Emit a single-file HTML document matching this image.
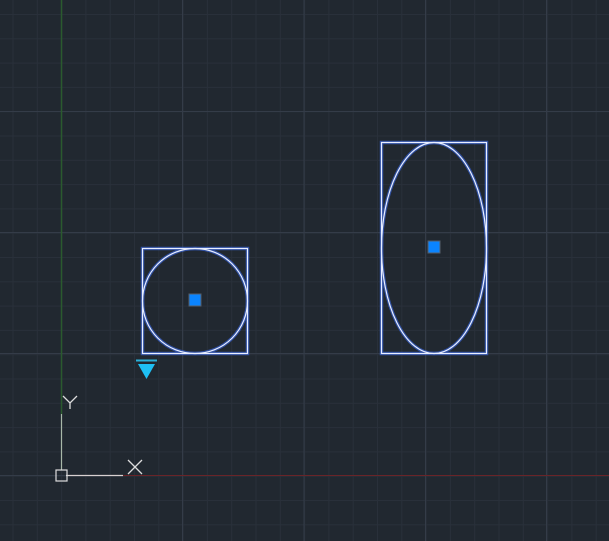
<!DOCTYPE html>
<html><head><style>html,body{margin:0;padding:0;background:#212830;overflow:hidden}svg{display:block}</style></head>
<body>
<svg width="609" height="541" viewBox="0 0 609 541" xmlns="http://www.w3.org/2000/svg">
<defs>
<pattern id="minor" x="12.5" y="14" width="24.3" height="24.3" patternUnits="userSpaceOnUse">
<path d="M0.5 0V24.3M0 0.5H24.3" stroke="#29303a" stroke-width="1"/>
</pattern>
</defs>
<rect width="609" height="541" fill="#212830"/>
<rect width="609" height="541" fill="url(#minor)"/>
<g stroke="#343c48" stroke-width="1">
<path d="M182.5 0V541M304 0V541M425.5 0V541M546.5 0V541"/>
<path d="M0 111.5H609M0 232.5H609M0 353.5H609M0 475.5H609"/>
</g>
<path d="M61.5 0V414" stroke="#2a5a2e" stroke-width="1.5"/>
<path d="M61.5 414V470" stroke="#a8b8a8" stroke-width="1.2"/>
<path d="M123 475.5H609" stroke="#6a2428" stroke-width="1"/>
<path d="M66 475.5H123" stroke="#d8d0d0" stroke-width="1.2"/>
<rect x="56" y="470" width="11" height="11" fill="none" stroke="#ddd" stroke-width="1.2"/>
<path d="M63 396L70 403L77 396M70 403V409" stroke="#ddd" stroke-width="1.3" fill="none"/>
<path d="M128 460L142 474M142 460L128 474" stroke="#ddd" stroke-width="1.3"/>
<g fill="none" stroke="#3a6cf0" stroke-width="3.5" opacity="0.6">
<rect x="142.5" y="248.5" width="105" height="105"/>
<circle cx="195" cy="301" r="52.5"/>
<rect x="381.5" y="142.5" width="105" height="211"/>
<ellipse cx="434" cy="248" rx="52.5" ry="105.5"/>
</g>
<g fill="none" stroke="#e8eeff" stroke-width="1.2">
<rect x="142.5" y="248.5" width="105" height="105"/>
<circle cx="195" cy="301" r="52.5"/>
<rect x="381.5" y="142.5" width="105" height="211"/>
<ellipse cx="434" cy="248" rx="52.5" ry="105.5"/>
</g>
<rect x="189" y="294" width="12" height="12" fill="#0a84ff" stroke="#555e6a" stroke-width="1"/>
<rect x="428" y="241" width="12" height="12" fill="#0a84ff" stroke="#555e6a" stroke-width="1"/>
<path d="M136 360.5H157" stroke="#2ab0d8" stroke-width="2"/>
<path d="M138 364H155L146.5 379Z" fill="#1ec0f5"/>
</svg>
</body></html>
